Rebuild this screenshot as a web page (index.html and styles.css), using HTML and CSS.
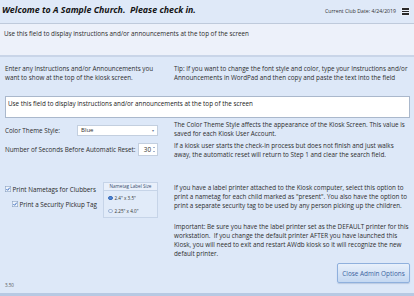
FILE: index.html
```html
<!DOCTYPE html>
<html lang="en">
<head>
<meta charset="utf-8">
<title>Kiosk Admin Options</title>
<link rel="stylesheet" href="styles.css">
</head>
<body>
<div class="app">
  <header class="topbar">
    <h1 class="title">Welcome to A Sample Church.&nbsp; Please check in.</h1>
    <div class="topright">
      <span class="clubdate">Current Club Date: 4/24/2019</span>
      <span class="menu"><i></i><i></i><i></i></span>
    </div>
  </header>
  <div class="announce">Use this field to display instructions and/or announcements at the top of the screen</div>
  <main class="admin">
    <div class="row intro">
      <p class="lbl">Enter any Instructions and/or Announcements you<br>want to show at the top of the kiosk screen.</p>
      <p class="help">Tip: If you want to change the font style and color, type your Instructions and/or<br>Announcements in WordPad and then copy and paste the text into the field</p>
    </div>
    <div class="textbox">Use this field to display instructions and/or announcements at the top of the screen</div>
    <div class="row theme">
      <div class="field">
        <span class="lbl">Color Theme Style:</span>
        <div class="select"><span>Blue</span><span class="caret">&#9662;</span></div>
      </div>
      <p class="help">The Color Theme Style affects the appearance of the Kiosk Screen. This value is<br>saved for each Kiosk User Account.</p>
    </div>
    <div class="row reset">
      <div class="field">
        <span class="lbl">Number of Seconds Before Automatic Reset:</span>
        <div class="spin"><span>30</span><span class="arrows"><i class="up"></i><i class="down"></i></span></div>
      </div>
      <p class="help">If a kiosk user starts the check-in process but does not finish and just walks<br>away, the automatic reset will return to Step 1 and clear the search field.</p>
    </div>
    <div class="row print">
      <div class="printopts">
        <div class="checks">
          <label class="check"><svg class="box" viewBox="0 0 6 6" width="6" height="6"><rect x="0.3" y="0.3" width="5.4" height="5.4" fill="#eef3fb" stroke="#8da3c2" stroke-width="0.6"/><path d="M1.4 3.1 L2.6 4.3 L4.7 1.7" fill="none" stroke="#3b6fc4" stroke-width="1"/></svg>Print Nametags for Clubbers</label>
          <label class="check sub"><svg class="box" viewBox="0 0 6 6" width="6" height="6"><rect x="0.3" y="0.3" width="5.4" height="5.4" fill="#eef3fb" stroke="#8da3c2" stroke-width="0.6"/><path d="M1.4 3.1 L2.6 4.3 L4.7 1.7" fill="none" stroke="#3b6fc4" stroke-width="1"/></svg>Print a Security Pickup Tag</label>
        </div>
        <div class="group">
          <div class="group-head">Nametag Label Size</div>
          <div class="radio on"><span class="dot"></span>2.4" x 3.5"</div>
          <div class="radio"><span class="dot"></span>2.25" x 4.0"</div>
        </div>
      </div>
      <div class="help">
        <p>If you have a label printer attached to the Kiosk computer, select this option to<br>print a nametag for each child marked as "present". You also have the option to<br>print a separate security tag to be used by any person picking up the children.</p>
        <p class="important">Important: Be sure you have the label printer set as the DEFAULT printer for this<br>workstation.&nbsp; If you change the default printer AFTER you have launched this<br>Kiosk, you will need to exit and restart AWdb kiosk so it will recognize the new<br>default printer.</p>
      </div>
    </div>
    <div class="footer">
      <button class="closebtn" type="button">Close Admin Options</button>
    </div>
    <div class="ver">3.50</div>
  </main>
</div>
</body>
</html>
```
FILE: styles.css
```css
* { box-sizing: border-box; }
html, body { margin: 0; padding: 0; }
body {
  width: 414px;
  height: 296px;
  overflow: hidden;
  font-family: "Open Sans", "Noto Sans", sans-serif;
  font-size: 6.3px;
  line-height: 9px;
  color: #2e2e2e;
  background: #dde8f8;
}
.app {
  height: 296px;
  display: flex;
  flex-direction: column;
  border-bottom: 3px solid #b7c9e3;
}
p { margin: 0; }
.help, .lbl { white-space: nowrap; }

.topbar {
  flex: none;
  height: 24px;
  display: flex;
  justify-content: space-between;
  align-items: center;
  padding: 0 4px 3px 2px;
  background: #dfe9f8;
  border-bottom: 1px solid #bfcadb;
}
.title {
  margin: 0;
  font-size: 8.8px;
  font-weight: 700;
  font-style: italic;
  color: #141414;
}
.topright { display: flex; align-items: center; gap: 5px; padding-top: 3px; }
.clubdate { font-size: 5.2px; color: #333; }
.menu {
  width: 9px; height: 9px;
  display: flex; flex-direction: column; justify-content: center; align-items: center; gap: 1.2px;
  background: #e8eef8;
}
.menu i { display: block; width: 7px; height: 1.3px; background: #2a2a2a; }

.announce {
  flex: none;
  height: 33px;
  padding: 5px 4px;
  background: #edf1fa;
  border-bottom: 2px solid #c9d5e8;
  color: #2c2c2c;
}

.admin {
  flex: 1;
  display: flex;
  flex-direction: column;
  padding: 7px 4px 0 5px;
}
.row {
  display: grid;
  grid-template-columns: 169px 1fr;
}
.intro .lbl { color: #2f2f2f; }

.textbox {
  margin-top: 14px;
  height: 22px;
  padding: 2px 2px;
  background: #fff;
  border: 1px solid #aab8cc;
  color: #222;
}

.theme { margin-top: 2px; }
.field { display: flex; align-items: center; justify-content: space-between; width: 153px; }
.theme .field { padding-top: 3px; }
.select {
  width: 81px; height: 11px;
  display: flex; justify-content: space-between; align-items: center;
  padding: 0 3px;
  background: #fff;
  border: 1px solid #c3cfdf;
  font-size: 6px;
}
.caret { font-size: 4px; color: #6a7d99; }

.reset { margin-top: 3px; }
.reset .field { margin-top: -2px; }
.spin {
  width: 20px; height: 13px;
  display: flex; justify-content: flex-end; align-items: center; gap: 2px;
  padding: 0 2px;
  background: #fff;
  border: 1px solid #c3cfdf;
}
.arrows { display: flex; flex-direction: column; gap: 3px; }
.arrows i { display: block; width: 0; height: 0; border-left: 1.2px solid transparent; border-right: 1.2px solid transparent; }
.arrows .up { border-bottom: 1.6px solid #4b6d9e; }
.arrows .down { border-top: 1.6px solid #4b6d9e; }

.print { margin-top: 24px; }
.printopts { display: flex; align-items: flex-start; }
.checks { width: 98px; display: flex; flex-direction: column; gap: 6px; padding-top: 1.5px; }
.check { display: flex; align-items: center; gap: 1.5px; color: #2a2a2a; white-space: nowrap; }
.check.sub { padding-left: 7px; }
.box { flex: none; width: 6px; height: 6px; }
.group {
  width: 55px; height: 36px;
  margin-top: -1px;
  border: 1px solid #c6d4e8;
  background: #e1ebf9;
  font-size: 4.6px;
  line-height: 6px;
  color: #333;
}
.group-head {
  height: 8px;
  text-align: center;
  line-height: 7.5px;
  color: #3a4d6e;
  background: #e9f0fb;
  border-bottom: 1px solid #c6d4e8;
}
.radio { display: flex; align-items: center; gap: 2px; padding-left: 4px; margin-top: 4px; }
.radio + .radio { margin-top: 7px; }
.dot {
  width: 4.5px; height: 4.5px; border-radius: 50%;
  border: 0.7px solid #9db4d6;
  background: #eaf1fb;
}
.radio.on .dot { background: #4f86d6; border-color: #3a6cb8; }
.important { margin-top: 12px; }

.footer {
  display: flex;
  justify-content: flex-end;
  margin-top: 5px;
}
.ver { font-size: 4.5px; line-height: 5px; color: #555; margin-top: 0; }
.closebtn {
  width: 73px; height: 20px;
  padding: 0;
  font-family: inherit;
  font-size: 6.4px;
  color: #3a62a0;
  background: linear-gradient(#e8f0fb, #c4d8f2);
  border: 1px solid #8fb0dd;
  border-radius: 2px;
  box-shadow: 0 1px 1px rgba(80,110,160,0.25);
}
```
